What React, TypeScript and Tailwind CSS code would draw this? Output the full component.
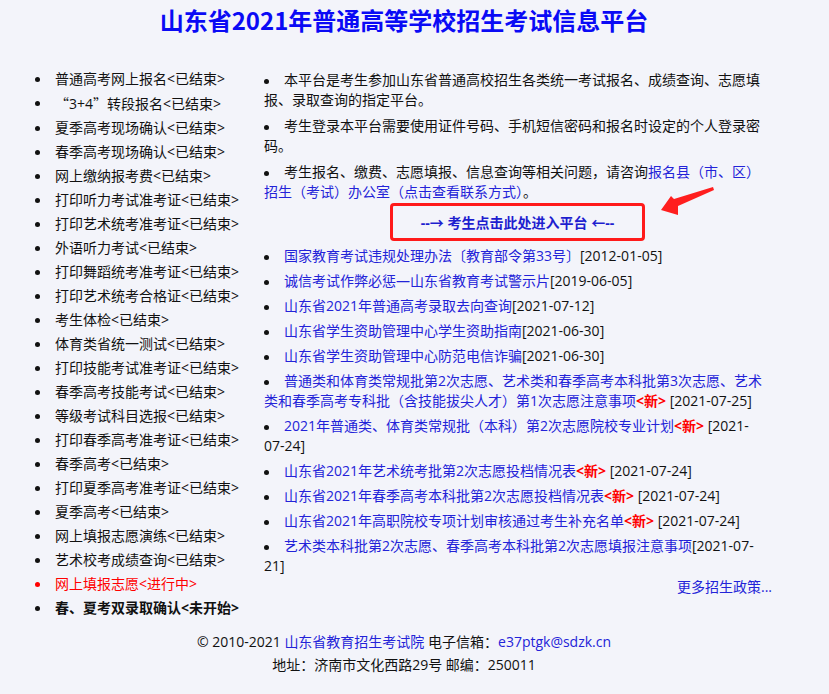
import React from 'react';

const leftItems = [
  '普通高考网上报名<已结束>',
  'QUOTE',
  '夏季高考现场确认<已结束>',
  '春季高考现场确认<已结束>',
  '网上缴纳报考费<已结束>',
  '打印听力考试准考证<已结束>',
  '打印艺术统考准考证<已结束>',
  '外语听力考试<已结束>',
  '打印舞蹈统考准考证<已结束>',
  '打印艺术统考合格证<已结束>',
  '考生体检<已结束>',
  '体育类省统一测试<已结束>',
  '打印技能考试准考证<已结束>',
  '春季高考技能考试<已结束>',
  '等级考试科目选报<已结束>',
  '打印春季高考准考证<已结束>',
  '春季高考<已结束>',
  '打印夏季高考准考证<已结束>',
  '夏季高考<已结束>',
  '网上填报志愿演练<已结束>',
  '艺术校考成绩查询<已结束>',
];

const news = [
  { title: '国家教育考试违规处理办法〔教育部令第33号〕', date: '[2012-01-05]' },
  { title: '诚信考试作弊必惩—山东省教育考试警示片', date: '[2019-06-05]' },
  { title: '山东省2021年普通高考录取去向查询', date: '[2021-07-12]' },
  { title: '山东省学生资助管理中心学生资助指南', date: '[2021-06-30]' },
  { title: '山东省学生资助管理中心防范电信诈骗', date: '[2021-06-30]' },
  {
    title: '普通类和体育类常规批第2次志愿、艺术类和春季高考本科批第3次志愿、艺术类和春季高考专科批（含技能拔尖人才）第1次志愿注意事项',
    isNew: true,
    date: '[2021-07-25]',
  },
  { title: '2021年普通类、体育类常规批（本科）第2次志愿院校专业计划', isNew: true, date: '[2021-07-24]', early: true },
  { title: '山东省2021年艺术统考批第2次志愿投档情况表', isNew: true, date: '[2021-07-24]' },
  { title: '山东省2021年春季高考本科批第2次志愿投档情况表', isNew: true, date: '[2021-07-24]' },
  { title: '山东省2021年高职院校专项计划审核通过考生补充名单', isNew: true, date: '[2021-07-24]' },
  { title: '艺术类本科批第2次志愿、春季高考本科批第2次志愿填报注意事项', date: '[2021-07-21]' },
];

function Dot({ red }: { red?: boolean }) {
  return (
    <span className="w-[26px] shrink-0 flex items-center pl-[6px]">
      <span className={`w-[5px] h-[5px] rounded-full ${red ? 'bg-[#ff0000]' : 'bg-[#111]'}`} />
    </span>
  );
}

function Bullet() {
  return <span className="inline-block w-[5px] h-[5px] rounded-full bg-[#111] mr-[15px] align-middle" />;
}

export default function App() {
  return (
    <div className="min-h-screen bg-[#f3f4fa] text-[14px] text-[#111] font-[family-name:'Open_Sans','Noto_Sans_CJK_SC',sans-serif]">
      <div className="relative w-[808px] pb-[20px]">
        <h1 className="text-center text-[24px] leading-[40px] font-bold text-[#0a0af5] font-[family-name:'Noto_Sans_CJK_SC',sans-serif]">
          山东省2021年普通高等学校招生考试信息平台
        </h1>

        <div className="flex mt-[27px]">
          {/* left: schedule list */}
          <ul className="ml-[29px] w-[235px] shrink-0">
            {leftItems.map((t, i) => (
              <li key={i} className="flex leading-[24px]">
                <Dot />
                {t === 'QUOTE' ? (
                  <span>
                    <span className="font-[family-name:'Noto_Sans_CJK_SC',sans-serif]">“</span>3+4
                    <span className="font-[family-name:'Noto_Sans_CJK_SC',sans-serif]">”</span>转段报名&lt;已结束&gt;
                  </span>
                ) : (
                  <span>{t}</span>
                )}
              </li>
            ))}
            <li className="flex leading-[24px] text-[#ff0000]">
              <Dot red />
              <span>网上填报志愿&lt;进行中&gt;</span>
            </li>
            <li className="flex leading-[24px] font-bold">
              <Dot />
              <span>春、夏考双录取确认&lt;未开始&gt;</span>
            </li>
          </ul>

          {/* right: notes and news */}
          <div className="w-[508px] shrink-0 mt-[3px]">
            <p className="leading-[20px] mb-[6px]">
              <Bullet />
              本平台是考生参加山东省普通高校招生各类统一考试报名、成绩查询、志愿填报、录取查询的指定平台。
            </p>
            <p className="leading-[20px] mb-[6px]">
              <Bullet />
              考生登录本平台需要使用证件号码、手机短信密码和报名时设定的个人登录密码。
            </p>
            <p className="leading-[20px]">
              <Bullet />
              考生报名、缴费、志愿填报、信息查询等相关问题，请咨询
              <a className="text-[#2323d8]">报名县（市、区）招生（考试）办公室（点击查看联系方式）</a>。
            </p>

            <a className="mt-[1px] ml-[126px] w-[255px] h-[38px] border-[3px] border-[#ff1a1a] rounded-[4px] flex items-center justify-center font-bold text-[#1e1ecf]">
              --→ 考生点击此处进入平台 ←--
            </a>

            <ul className="mt-[5px]">
              {news.map((n, i) => (
                <li key={i} className="leading-[20px] mb-[5px] last:mb-0">
                  <Bullet />
                  <a className="text-[#2323d8]">{n.title}</a>
                  {n.isNew && <span className="text-[#ff0000] font-bold">&lt;新&gt;</span>}
                  {n.isNew ? ' ' : ''}
                  {n.early ? (
                    <>
                      {n.date.slice(0, 6)}
                      <wbr />
                      <span className="whitespace-nowrap">{n.date.slice(6)}</span>
                    </>
                  ) : (
                    n.date
                  )}
                </li>
              ))}
            </ul>
            <div className="mt-[1px] leading-[20px] text-right text-[#2323d8]">更多招生政策...</div>
          </div>
        </div>

        <div className="mt-[10px] text-center leading-[23px]">
          <p>
            © 2010-2021 <a className="text-[#2323d8]">山东省教育招生考试院</a> 电子信箱：<a className="text-[#2323d8]">e37ptgk@sdzk.cn</a>
          </p>
          <p>地址：济南市文化西路29号 邮编：250011</p>
        </div>

        {/* red pointer arrow */}
        <svg className="absolute left-[653px] top-[183px]" width="64" height="36" viewBox="0 0 64 36">
          <polygon points="8,27 18,13 21,16 60,4 61,7 25,23 25,32" fill="#ff1e1e" />
        </svg>
      </div>
    </div>
  );
}
